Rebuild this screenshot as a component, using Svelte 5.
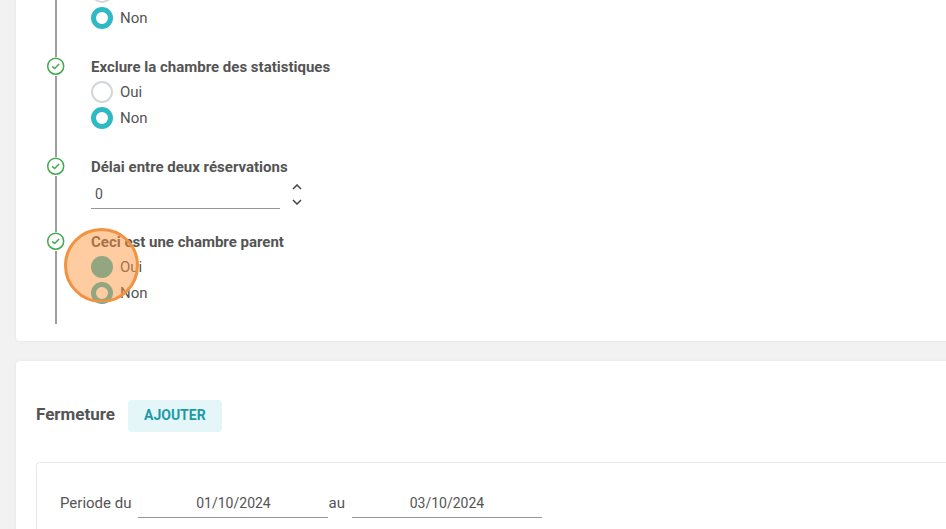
<script>
  let stats = "non";
  let previous = "non";
  let parent = "non";
  let delay = 0;
  let from = "01/10/2024";
  let to = "03/10/2024";
</script>

{#snippet check()}
  <div class="rail">
    <svg width="18" height="18" viewBox="0 0 18 18" fill="none" stroke="#43a94e" aria-hidden="true">
      <circle cx="8.7" cy="9.2" r="8" stroke-width="1.5" />
      <path d="M5.2 9.4 L7.6 11.5 L12.1 7" stroke-width="1.5" />
    </svg>
    <div class="line"></div>
  </div>
{/snippet}

<main>
  <section class="card steps">
    <div class="step">
      <div class="rail"><div class="line"></div></div>
      <div class="content">
        <div class="option">
          <input type="radio" name="previous" value="oui" aria-label="Oui" bind:group={previous} />
        </div>
        <label class="option">
          <input type="radio" name="previous" value="non" bind:group={previous} />Non
        </label>
      </div>
    </div>

    <div class="step">
      {@render check()}
      <fieldset class="content">
        <legend class="title">Exclure la chambre des statistiques</legend>
        <label class="option">
          <input type="radio" name="stats" value="oui" bind:group={stats} />Oui
        </label>
        <label class="option">
          <input type="radio" name="stats" value="non" bind:group={stats} />Non
        </label>
      </fieldset>
    </div>

    <div class="step">
      {@render check()}
      <div class="content short">
        <label class="title" for="delay">Délai entre deux réservations</label>
        <div class="number">
          <input id="delay" class="field" type="text" inputmode="numeric" bind:value={delay} />
          <div class="arrows">
            <button type="button" aria-label="+" on:click={() => delay++}>
              <svg width="10" height="6" viewBox="0 0 10 6"><path d="M1 5 L5 1 L9 5" /></svg>
            </button>
            <button type="button" aria-label="-" on:click={() => delay--}>
              <svg width="10" height="6" viewBox="0 0 10 6"><path d="M1 1 L5 5 L9 1" /></svg>
            </button>
          </div>
        </div>
      </div>
    </div>

    <div class="step">
      {@render check()}
      <fieldset class="content last">
        <legend class="title">Ceci est une chambre parent</legend>
        <label class="option">
          <input class="pressed" type="radio" name="parent" value="oui" bind:group={parent} />Oui
        </label>
        <label class="option">
          <input type="radio" name="parent" value="non" bind:group={parent} />Non
        </label>
        <div class="spot"></div>
      </fieldset>
    </div>
  </section>

  <section class="card closing">
    <header>
      <h2>Fermeture</h2>
      <button type="button" class="add">AJOUTER</button>
    </header>
    <div class="period">
      <label for="from">Periode du</label>
      <input id="from" class="field date" type="text" bind:value={from} />
      <label for="to">au</label>
      <input id="to" class="field date" type="text" bind:value={to} />
    </div>
  </section>
</main>

<style>
  :global(body) {
    background: #f2f2f2;
  }
  main {
    height: 100vh;
    overflow: hidden;
    padding-left: 16px;
    box-sizing: border-box;
    font-family: Roboto, sans-serif;
    font-size: 15px;
    line-height: 20px;
    color: #545454;
  }
  .card {
    background: #fff;
    border-radius: 4px 0 0 4px;
    box-shadow: 0 0 2px 1px #e9e9e9;
  }
  .steps {
    margin-top: -21px;
    padding: 0 0 17px 31px;
  }
  .step {
    display: flex;
    gap: 26px;
  }
  .rail {
    width: 18px;
    display: flex;
    flex-direction: column;
    align-items: center;
    gap: 1px;
  }
  .rail svg {
    display: block;
    overflow: visible;
  }
  .line {
    flex: 1;
    width: 2px;
    background: #9e9e9e;
  }
  .content {
    position: relative;
    border: 0;
    margin: 0;
    padding: 0 0 26px;
    min-width: 0;
  }
  .short {
    padding-bottom: 23px;
  }
  .last {
    padding-bottom: 18px;
  }
  .title {
    display: block;
    padding: 0 0 2px;
    font-weight: 700;
  }
  .option {
    display: flex;
    align-items: center;
    gap: 7px;
    height: 26px;
  }
  input[type="radio"] {
    appearance: none;
    box-sizing: border-box;
    width: 22px;
    height: 22px;
    margin: 0;
    border: 2px solid #d3d6da;
    border-radius: 50%;
    background: #fff;
  }
  input[type="radio"]:checked {
    border: 5px solid #2fb9c5;
  }
  input[type="radio"].pressed {
    border-color: #2fb9c5;
    background: #2fb9c5;
  }
  .field {
    box-sizing: border-box;
    width: 189px;
    height: 30px;
    padding: 0 4px;
    border: 0;
    border-bottom: 1px solid #959595;
    border-radius: 0;
    background: none;
    font: inherit;
    font-size: 14px;
    color: inherit;
  }
  .number {
    display: flex;
    gap: 12px;
  }
  .arrows {
    display: flex;
    flex-direction: column;
  }
  .arrows button {
    display: flex;
    align-items: center;
    height: 15px;
    padding: 0;
    border: 0;
    background: none;
  }
  .arrows path {
    fill: none;
    stroke: #444;
    stroke-width: 1.5;
  }
  .spot {
    position: absolute;
    top: -26px;
    left: -27px;
    box-sizing: border-box;
    width: 75px;
    height: 75px;
    border: 3px solid #f2923f;
    border-radius: 50%;
    background: rgba(255, 146, 56, 0.48);
    pointer-events: none;
  }
  .closing {
    margin-top: 20px;
    padding: 39px 0 40px 20px;
  }
  header {
    display: flex;
    align-items: baseline;
    gap: 13px;
    margin-bottom: 30px;
  }
  h2 {
    margin: 0;
    font-size: 17px;
    font-weight: 700;
  }
  .add {
    padding: 5px 16px 7px;
    border: 0;
    border-radius: 4px;
    background: #e4f6f8;
    color: #1c9aa8;
    font: inherit;
    font-size: 14px;
    font-weight: 700;
  }
  .period {
    display: flex;
    align-items: center;
    padding: 25px 0 40px 23px;
    border: 1px solid #e8e8e8;
    border-right: 0;
    border-radius: 4px 0 0 4px;
  }
  .date {
    width: 190px;
    margin-left: 7px;
    text-align: center;
  }
</style>
